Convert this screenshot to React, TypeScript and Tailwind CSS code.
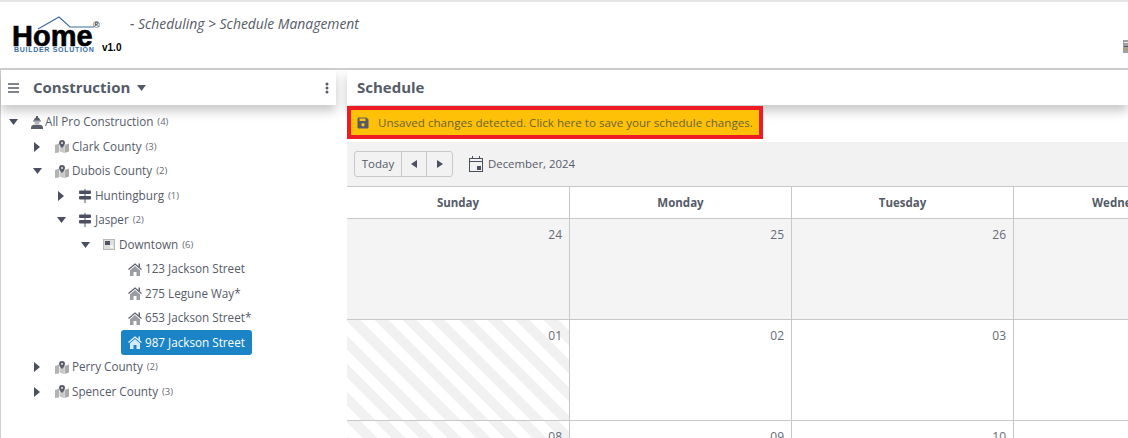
const font = "font-['Open_Sans',sans-serif]"

function Caret({ open }: { open: boolean }) {
  return open ? (
    <svg width="9" height="6" viewBox="0 0 9 6" className="block"><path d="M0 0h9L4.500 6z" fill="#4a5060" /></svg>
  ) : (
    <svg width="6" height="10" viewBox="0 0 6 10" className="block"><path d="M0 0v10l6-5z" fill="#4a5060" /></svg>
  )
}

function CrewIcon() {
  return (
    <svg width="12" height="13" viewBox="0 0 12 13" className="mr-[-1px] block">
      <path d="M3 4.500a3 3 0 0 1 6 0z" fill="#5a5f6c" />
      <rect x="5" y="0" width="2" height="2" fill="#5a5f6c" />
      <rect x="2" y="4.500" width="8" height="1" fill="#5a5f6c" />
      <path d="M3.500 6h5a2.500 2.500 0 0 1-5 0z" fill="#b5b7bc" />
      <path d="M0 13v-1.500C0 10 1.500 9 3.500 8.800h5C10.500 9 12 10 12 11.500V13z" fill="#5a5f6c" />
    </svg>
  )
}

function MapIcon() {
  return (
    <svg width="14" height="13" viewBox="0 0 14 13" className="block">
      <path d="M0 5l4-1.500v9L0 13z" fill="#b4b4b4" />
      <path d="M4.500 3.500l4.500 1.500v8l-4.500-1.500z" fill="#c9c9c9" />
      <path d="M9.500 5L14 3.500v8L9.500 13z" fill="#aaaaaa" />
      <path d="M7 0a3 3 0 0 1 3 3c0 1.800-2 3.600-3 5-1-1.400-3-3.200-3-5a3 3 0 0 1 3-3z" fill="#555b68" />
      <circle cx="7" cy="3" r="1" fill="#e8e8e8" />
    </svg>
  )
}

function SignIcon() {
  return (
    <svg width="12" height="14" viewBox="0 0 12 14" className="mr-[1px] block">
      <rect x="5" y="0" width="2" height="14" fill="#a5a7ad" />
      <rect x="0" y="1.500" width="12" height="3.500" rx="1" fill="#4a5060" />
      <rect x="0" y="7" width="12" height="3.500" rx="1" fill="#4a5060" />
    </svg>
  )
}

function AreaIcon() {
  return (
    <svg width="12" height="11" viewBox="0 0 12 11" className="mr-[1px] block">
      <rect x="0" y="0" width="12" height="11" fill="#b9b9b9" />
      <rect x="1" y="1" width="10" height="9" fill="#dedede" />
      <rect x="2" y="2" width="5" height="4" fill="#4f5563" />
      <rect x="7" y="6" width="3" height="3" fill="#f4f4f4" />
    </svg>
  )
}

function HouseIcon({ active }: { active?: boolean }) {
  const body = active ? "#d5e9f6" : "#9a9da3"
  const roof = active ? "#e9f4fb" : "#5f6470"
  return (
    <svg width="14" height="13" viewBox="0 0 14 13" className="block shrink-0">
      <path d="M0.500 6.500L7 1l6.500 5.500" fill="none" stroke={roof} strokeWidth="1.300" />
      <rect x="10.500" y="0.500" width="1.500" height="3.500" fill={roof} />
      <path d="M7 3l5 4.300V13H8.500V9h-3v4H2V7.300z" fill={body} />
    </svg>
  )
}

function TreeRow({ indent, open, icon, label, count }: { indent: string; open?: boolean; icon: React.ReactNode; label: string; count?: number }) {
  return (
    <div className={`flex h-[24.500px] items-center ${indent}`}>
      <div className="flex w-[23px] shrink-0">
        <div className="flex w-[10px] justify-center">{open !== undefined && <Caret open={open} />}</div>
      </div>
      {icon}
      <span className="ml-[3px] whitespace-nowrap text-[11.700px] text-[#555b68]">{label}</span>
      {count !== undefined && <span className="ml-[4px] text-[9.500px] text-[#666b76]">({count})</span>}
    </div>
  )
}

function HouseRow({ label, active }: { label: string; active?: boolean }) {
  return (
    <div className="flex h-[24.500px] items-center pl-[120px]">
      <div className={`flex h-[25px] w-[131px] items-center rounded-[3px] pl-[7px] ${active ? "bg-[#1b84c6]" : ""}`}>
        <HouseIcon active={active} />
        <span className={`ml-[3px] whitespace-nowrap text-[11.700px] ${active ? "text-white" : "text-[#555b68]"}`}>{label}</span>
      </div>
    </div>
  )
}

function DayHead({ name, width }: { name: string; width: string }) {
  return (
    <div className={`flex shrink-0 items-center justify-center border-r border-[#c8c8c8] text-[11.500px] font-bold text-[#555b68] ${width}`}>
      {name}
    </div>
  )
}

function DayCell({ day, kind, width }: { day?: string; kind: "past" | "striped" | "plain"; width: string }) {
  const bg =
    kind === "past"
      ? "bg-[#f4f4f4]"
      : kind === "striped"
        ? "bg-[repeating-linear-gradient(45deg,#ffffff_0px,#ffffff_10px,#f1f1f1_10px,#f1f1f1_20px)]"
        : "bg-white"
  return (
    <div className={`shrink-0 border-r border-[#c8c8c8] pr-[7px] pt-[7px] text-right text-[12px] text-[#666b76] ${bg} ${width}`}>
      {day}
    </div>
  )
}

function WeekRow({ days, kinds }: { days: string[]; kinds: ("past" | "striped" | "plain")[] }) {
  return (
    <div className="flex h-[101px] shrink-0 border-b border-[#c8c8c8]">
      {days.map((d, i) => (
        <DayCell key={i} day={d} kind={kinds[i]} width={i === 0 ? "w-[223px]" : "w-[222px]"} />
      ))}
      <div className={`flex-1 ${kinds[3] === "past" ? "bg-[#f4f4f4]" : "bg-white"}`} />
    </div>
  )
}

export default function App() {
  return (
    <div className={`flex h-[438px] w-[1128px] flex-col overflow-hidden bg-white ${font}`}>
      {/* top header */}
      <div className="relative h-[70px] shrink-0 border-t-2 border-b-2 border-t-[#e6e6e6] border-b-[#cfcfcf]">
        <div className="absolute left-[13px] top-[14px] h-[40px] w-[110px]">
          <svg width="90" height="16" viewBox="0 0 90 16" className="absolute left-0 top-0">
            <path d="M25 13 L46 1 L57 11 H81" fill="none" stroke="#3b6ea5" strokeWidth="1.200" />
          </svg>
          <span className="absolute left-[-1px] top-[9px] font-['Liberation_Sans',sans-serif] text-[29px] font-bold leading-[22px] text-black [-webkit-text-stroke:0.6px_black]">
            Home
          </span>
          <span className="absolute left-[80px] top-[3px] font-['Liberation_Sans',sans-serif] text-[9px] font-bold text-[#333]">®</span>
          <span className="absolute left-[1px] top-[31px] whitespace-nowrap font-['Liberation_Sans',sans-serif] text-[7px] font-bold leading-[6px] tracking-[0.700px] text-[#3b6ea5]">
            BUILDER SOLUTION
          </span>
          <span className="absolute left-[89px] top-[24px] font-['Liberation_Sans',sans-serif] text-[10px] font-bold text-black">v1.0</span>
        </div>
        <div className="absolute left-[130px] top-[12px] whitespace-nowrap text-[13.900px] italic text-[#555b68]">
          - Scheduling &gt; Schedule Management
        </div>
        <svg width="5" height="13" viewBox="0 0 5 13" className="absolute left-[1123px] top-[38px]">
          <rect width="5" height="13" fill="#a0a0a0" />
          <rect x="1" y="2" width="4" height="1" fill="#e8e8e8" />
          <rect x="1" y="6" width="4" height="1" fill="#5a5a5a" />
          <rect x="1" y="8" width="2" height="2" fill="#c89a5a" />
        </svg>
      </div>

      <div className="flex min-h-0 flex-1">
        {/* left tree panel */}
        <div className="w-[336px] shrink-0 border-l border-[#cfcfcf]">
          <div className="relative z-10 flex h-[35px] items-center bg-white pl-[7px] pr-[6px] shadow-[0_6px_10px_rgba(0,0,0,0.22)]">
            <svg width="12" height="10" viewBox="0 0 12 10" className="block">
              <path d="M0 1h11M0 5h11M0 9h11" stroke="#555b68" strokeWidth="1.500" />
            </svg>
            <span className="ml-[13px] text-[15px] font-bold text-[#555b68]">Construction</span>
            <svg width="9" height="6" viewBox="0 0 9 6" className="ml-[7px] block"><path d="M0 0h9L4.500 6z" fill="#555b68" /></svg>
            <svg width="4" height="12" viewBox="0 0 4 12" className="ml-auto mr-[1px] block">
              <circle cx="2" cy="2" r="1.500" fill="#555b68" />
              <circle cx="2" cy="6" r="1.500" fill="#555b68" />
              <circle cx="2" cy="10" r="1.500" fill="#555b68" />
            </svg>
          </div>
          <div className="pt-[5px]">
            <TreeRow indent="pl-[7px]" open icon={<CrewIcon />} label="All Pro Construction" count={4} />
            <TreeRow indent="pl-[31px]" open={false} icon={<MapIcon />} label="Clark County" count={3} />
            <TreeRow indent="pl-[31px]" open icon={<MapIcon />} label="Dubois County" count={2} />
            <TreeRow indent="pl-[55px]" open={false} icon={<SignIcon />} label="Huntingburg" count={1} />
            <TreeRow indent="pl-[55px]" open icon={<SignIcon />} label="Jasper" count={2} />
            <TreeRow indent="pl-[79px]" open icon={<AreaIcon />} label="Downtown" count={6} />
            <HouseRow label="123 Jackson Street" />
            <HouseRow label="275 Legune Way*" />
            <HouseRow label="653 Jackson Street*" />
            <HouseRow label="987 Jackson Street" active />
            <TreeRow indent="pl-[31px]" open={false} icon={<MapIcon />} label="Perry County" count={2} />
            <TreeRow indent="pl-[31px]" open={false} icon={<MapIcon />} label="Spencer County" count={3} />
          </div>
        </div>

        <div className="w-[11px] shrink-0" />

        {/* schedule panel */}
        <div className="flex min-w-0 flex-1 flex-col">
          <div className="relative z-10 flex h-[35px] shrink-0 items-center bg-white pl-[10px] text-[15px] font-bold text-[#555b68] shadow-[0_6px_10px_rgba(0,0,0,0.22)]">
            Schedule
          </div>
          <div className="relative z-20 mt-[1px] h-[33px] w-[416px] shrink-0 border-[4px] border-[#ed1c24] bg-[#ffc107] pl-[6px]">
            <div className="flex h-full items-center">
              <svg width="12" height="12" viewBox="0 0 12 12" className="block">
                <path d="M1.500 0.500H9.500L11.500 2.500V10.500a1 1 0 0 1-1 1H1.500a1 1 0 0 1-1-1V1.500a1 1 0 0 1 1-1z" fill="#555b68" />
                <rect x="2.500" y="1.500" width="6" height="2.500" fill="#ffc107" />
                <circle cx="6" cy="7.800" r="1.700" fill="#ffc107" />
              </svg>
              <span className="ml-[9px] whitespace-nowrap text-[11.600px] text-[#6b6338]">
                Unsaved changes detected. Click here to save your schedule changes.
              </span>
            </div>
          </div>
          <div className="mt-[3px] flex h-[44px] shrink-0 items-center bg-[#f2f2f2] pl-[7px]">
            <div className="flex h-[26px] items-stretch rounded-[3px] border border-[#c8c8c8] text-[11.500px] text-[#555b68]">
              <div className="flex w-[47px] items-center justify-center border-r border-[#c8c8c8]">Today</div>
              <div className="flex w-[25px] items-center justify-center border-r border-[#c8c8c8]">
                <svg width="6" height="8" viewBox="0 0 6 8" className="block"><path d="M6 0v8L0 4z" fill="#4a5060" /></svg>
              </div>
              <div className="flex w-[25px] items-center justify-center">
                <svg width="6" height="8" viewBox="0 0 6 8" className="block"><path d="M0 0v8l6-4z" fill="#4a5060" /></svg>
              </div>
            </div>
            <svg width="14" height="16" viewBox="0 0 14 16" className="ml-[16px] block">
              <rect x="0.500" y="2.500" width="13" height="13" fill="none" stroke="#4a5060" />
              <path d="M0 5.500h14" stroke="#4a5060" />
              <path d="M3.500 0v3M10.500 0v3" stroke="#4a5060" />
              <rect x="8" y="10" width="4" height="4" fill="#4a5060" />
            </svg>
            <span className="ml-[5px] text-[11.400px] text-[#555b68]">December, 2024</span>
          </div>
          <div className="flex h-[33px] shrink-0 border-y border-[#c8c8c8] bg-white">
            <DayHead name="Sunday" width="w-[223px]" />
            <DayHead name="Monday" width="w-[222px]" />
            <DayHead name="Tuesday" width="w-[222px]" />
            <div className="flex w-[222px] shrink-0 items-center justify-center text-[11.500px] font-bold text-[#555b68]">Wednesday</div>
          </div>
          <WeekRow days={["24", "25", "26"]} kinds={["past", "past", "past", "past"]} />
          <WeekRow days={["01", "02", "03"]} kinds={["striped", "plain", "plain", "plain"]} />
          <WeekRow days={["08", "09", "10"]} kinds={["striped", "plain", "plain", "plain"]} />
        </div>
      </div>
    </div>
  )
}
